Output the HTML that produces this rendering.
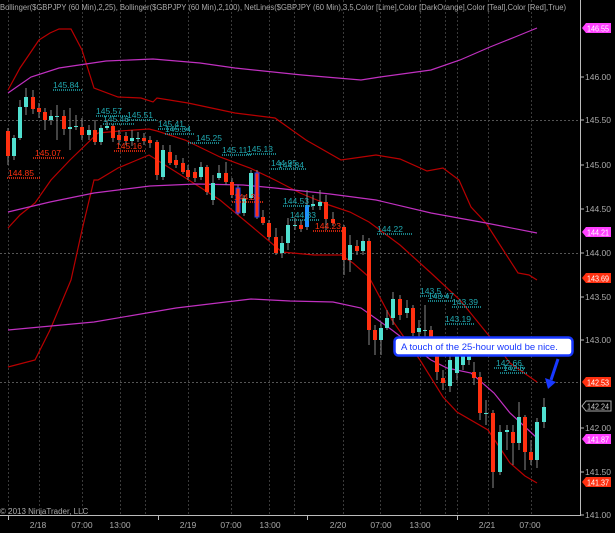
<!DOCTYPE html>
<html><head><meta charset="utf-8"><style>
html,body{margin:0;padding:0;background:#000;}
svg{display:block;font-family:"Liberation Sans",sans-serif;}
</style></head><body>
<svg width="615" height="533" viewBox="0 0 615 533" xmlns="http://www.w3.org/2000/svg">
<rect width="615" height="533" fill="#000"/>
<g stroke="#3a3a3a" stroke-width="1" stroke-dasharray="2,2">
<line x1="8.5" y1="0" x2="8.5" y2="515"/><line x1="39.5" y1="0" x2="39.5" y2="515"/><line x1="82.5" y1="0" x2="82.5" y2="515"/><line x1="120.5" y1="0" x2="120.5" y2="515"/><line x1="145.5" y1="0" x2="145.5" y2="515"/><line x1="188.5" y1="0" x2="188.5" y2="515"/><line x1="231.5" y1="0" x2="231.5" y2="515"/><line x1="269.5" y1="0" x2="269.5" y2="515"/><line x1="294.5" y1="0" x2="294.5" y2="515"/><line x1="343.5" y1="0" x2="343.5" y2="515"/><line x1="380.5" y1="0" x2="380.5" y2="515"/><line x1="420.5" y1="0" x2="420.5" y2="515"/><line x1="445.5" y1="0" x2="445.5" y2="515"/><line x1="457.5" y1="0" x2="457.5" y2="515"/><line x1="488.5" y1="0" x2="488.5" y2="515"/><line x1="531.5" y1="0" x2="531.5" y2="515"/>
</g>
<g stroke="#555" stroke-width="1" stroke-dasharray="2,2">
<line x1="0" y1="120.5" x2="580" y2="120.5"/><line x1="0" y1="253.5" x2="580" y2="253.5"/><line x1="0" y1="382.5" x2="580" y2="382.5"/>
</g>
<g fill="none" stroke-width="1.2">
<polyline stroke="#b80000" points="8,90 20,68 39,40 50,33 59,29 71,29 82,50 94,88 118,97 141,98 153,102 157,98 188,103 235,113 275,118 306,140 341,160 376,155 400,159 427,171 443,168 459,180 471,207 486,223 500,245 518,273 529,275 537,280"/>
<polyline stroke="#b80000" points="8,228 20,215 35,203 51,180 70,160 98,133 120,131 149,129 157,131 185,140 220,157 250,168 275,180 300,193 329,205 350,212 369,222 400,245 431,273 460,300 490,337 510,363 537,382"/>
<polyline stroke="#b80000" points="8,367 35,360 50,330 71,280 82,230 94,180 98,180 118,168 149,155 157,160 184,177 220,200 250,225 282,252 314,255 341,255 353,263 369,277 392,320 420,360 443,397 457,412 488,430 510,463 525,476 537,483"/>
<polyline stroke="#c030c0" points="8,93 31,77 59,68 106,61 153,59 200,63 235,68 302,75 361,80 380,77 431,70 460,60 490,47 515,37 537,28"/>
<polyline stroke="#c030c0" points="8,212 50,202 94,193 150,186 196,184 243,185 275,188 330,194 376,200 431,213 486,223 537,233"/>
<polyline stroke="#c030c0" points="8,330 94,322 176,308 251,299 290,301 333,302 361,308 392,330 431,360 447,368 471,373 494,393 510,413 537,438"/>
</g>
<g stroke="#888" stroke-width="1">
<line x1="8" y1="128" x2="8" y2="165"/><line x1="14" y1="135" x2="14" y2="160"/><line x1="20" y1="100" x2="20" y2="140"/><line x1="26" y1="88" x2="26" y2="115"/><line x1="33" y1="90" x2="33" y2="114"/><line x1="39" y1="103" x2="39" y2="118"/><line x1="45" y1="108" x2="45" y2="130"/><line x1="51" y1="110" x2="51" y2="125"/><line x1="57" y1="105" x2="57" y2="140"/><line x1="64" y1="110" x2="64" y2="135"/><line x1="70" y1="108" x2="70" y2="150"/><line x1="76" y1="115" x2="76" y2="130"/><line x1="82" y1="118" x2="82" y2="140"/><line x1="89" y1="125" x2="89" y2="140"/><line x1="95" y1="120" x2="95" y2="145"/><line x1="101" y1="125" x2="101" y2="145"/><line x1="107" y1="120" x2="107" y2="130"/><line x1="113" y1="124" x2="113" y2="142"/><line x1="119" y1="130" x2="119" y2="145"/><line x1="126" y1="132" x2="126" y2="145"/><line x1="132" y1="130" x2="132" y2="146"/><line x1="138" y1="132" x2="138" y2="142"/><line x1="144" y1="133" x2="144" y2="145"/><line x1="150" y1="136" x2="150" y2="148"/><line x1="157" y1="140" x2="157" y2="180"/><line x1="163" y1="145" x2="163" y2="180"/><line x1="170" y1="145" x2="170" y2="165"/><line x1="176" y1="155" x2="176" y2="168"/><line x1="183" y1="158" x2="183" y2="174"/><line x1="188" y1="165" x2="188" y2="180"/><line x1="195" y1="168" x2="195" y2="182"/><line x1="201" y1="162" x2="201" y2="180"/><line x1="207" y1="165" x2="207" y2="195"/><line x1="213" y1="175" x2="213" y2="205"/><line x1="219" y1="165" x2="219" y2="180"/><line x1="226" y1="162" x2="226" y2="185"/><line x1="232" y1="178" x2="232" y2="198"/><line x1="238" y1="185" x2="238" y2="215"/><line x1="244" y1="195" x2="244" y2="216"/><line x1="251" y1="170" x2="251" y2="200"/><line x1="257" y1="170" x2="257" y2="219"/><line x1="263" y1="210" x2="263" y2="225"/><line x1="269" y1="220" x2="269" y2="240"/><line x1="276" y1="228" x2="276" y2="255"/><line x1="282" y1="236" x2="282" y2="258"/><line x1="288" y1="218" x2="288" y2="250"/><line x1="295" y1="218" x2="295" y2="230"/><line x1="301" y1="220" x2="301" y2="232"/><line x1="307" y1="190" x2="307" y2="230"/><line x1="313" y1="195" x2="313" y2="210"/><line x1="320" y1="190" x2="320" y2="210"/><line x1="326" y1="195" x2="326" y2="230"/><line x1="333" y1="212" x2="333" y2="226"/><line x1="344" y1="225" x2="344" y2="275"/><line x1="350" y1="235" x2="350" y2="272"/><line x1="357" y1="240" x2="357" y2="255"/><line x1="363" y1="235" x2="363" y2="255"/><line x1="369" y1="238" x2="369" y2="345"/><line x1="375" y1="325" x2="375" y2="355"/><line x1="381" y1="322" x2="381" y2="355"/><line x1="387" y1="310" x2="387" y2="330"/><line x1="393" y1="292" x2="393" y2="325"/><line x1="400" y1="295" x2="400" y2="320"/><line x1="407" y1="300" x2="407" y2="318"/><line x1="413" y1="305" x2="413" y2="336"/><line x1="419" y1="320" x2="419" y2="340"/><line x1="425" y1="305" x2="425" y2="340"/><line x1="431" y1="326" x2="431" y2="355"/><line x1="437" y1="340" x2="437" y2="380"/><line x1="443" y1="370" x2="443" y2="390"/><line x1="450" y1="355" x2="450" y2="392"/><line x1="457" y1="345" x2="457" y2="380"/><line x1="463" y1="345" x2="463" y2="370"/><line x1="469" y1="350" x2="469" y2="365"/><line x1="474" y1="362" x2="474" y2="385"/><line x1="480" y1="372" x2="480" y2="420"/><line x1="486" y1="400" x2="486" y2="425"/><line x1="493" y1="410" x2="493" y2="488"/><line x1="500" y1="425" x2="500" y2="475"/><line x1="507" y1="425" x2="507" y2="450"/><line x1="513" y1="425" x2="513" y2="465"/><line x1="519" y1="402" x2="519" y2="450"/><line x1="525" y1="415" x2="525" y2="470"/><line x1="531" y1="440" x2="531" y2="465"/><line x1="537" y1="418" x2="537" y2="468"/><line x1="544" y1="398" x2="544" y2="428"/>
</g>
<g>
<g fill="#ff3010">
<rect x="6" y="131" width="4" height="25"/><rect x="31" y="97" width="4" height="12"/><rect x="37" y="108" width="4" height="4"/><rect x="43" y="112" width="4" height="8"/><rect x="62" y="116" width="4" height="13"/><rect x="80" y="127" width="4" height="8"/><rect x="93" y="130" width="4" height="12"/><rect x="111" y="126" width="4" height="12"/><rect x="117" y="135" width="4" height="5"/><rect x="124" y="136" width="4" height="5"/><rect x="142" y="138" width="4" height="3"/><rect x="148" y="140" width="4" height="3"/><rect x="155" y="142" width="4" height="33"/><rect x="168" y="152" width="4" height="11"/><rect x="174" y="160" width="4" height="5"/><rect x="181" y="163" width="4" height="9"/><rect x="186" y="170" width="4" height="7"/><rect x="193" y="172" width="4" height="6"/><rect x="205" y="167" width="4" height="25"/><rect x="224" y="173" width="4" height="9"/><rect x="230" y="182" width="4" height="13"/><rect x="236" y="188" width="4" height="25" stroke="#2040ff" stroke-width="1"/><rect x="255" y="173" width="4" height="44" stroke="#2040ff" stroke-width="1"/><rect x="261" y="217" width="4" height="6"/><rect x="267" y="223" width="4" height="14"/><rect x="274" y="237" width="4" height="16"/><rect x="299" y="225" width="4" height="4"/><rect x="324" y="202" width="4" height="17"/><rect x="331" y="219" width="4" height="4"/><rect x="342" y="227" width="4" height="33"/><rect x="355" y="246" width="4" height="5"/><rect x="367" y="241" width="4" height="89"/><rect x="373" y="330" width="4" height="10"/><rect x="398" y="299" width="4" height="16"/><rect x="411" y="308" width="4" height="25"/><rect x="429" y="330" width="4" height="17"/><rect x="435" y="345" width="4" height="27"/><rect x="441" y="378" width="4" height="5"/><rect x="472" y="372" width="4" height="6"/><rect x="478" y="377" width="4" height="36"/><rect x="491" y="413" width="4" height="59"/><rect x="511" y="432" width="4" height="11"/><rect x="523" y="417" width="4" height="35"/><rect x="529" y="452" width="4" height="8"/>
</g>
<g fill="#50e0d0">
<rect x="12" y="138" width="4" height="18"/><rect x="18" y="107" width="4" height="31"/><rect x="24" y="97" width="4" height="10"/><rect x="49" y="116" width="4" height="4"/><rect x="55" y="116" width="4" height="1"/><rect x="68" y="127" width="4" height="2"/><rect x="74" y="126" width="4" height="1"/><rect x="87" y="130" width="4" height="5"/><rect x="99" y="128" width="4" height="14"/><rect x="105" y="126" width="4" height="2"/><rect x="130" y="138" width="4" height="3"/><rect x="136" y="138" width="4" height="1"/><rect x="161" y="150" width="4" height="27"/><rect x="199" y="167" width="4" height="10"/><rect x="211" y="183" width="4" height="17"/><rect x="217" y="173" width="4" height="5"/><rect x="242" y="198" width="4" height="15"/><rect x="249" y="173" width="4" height="25"/><rect x="280" y="243" width="4" height="10"/><rect x="286" y="225" width="4" height="18"/><rect x="293" y="225" width="4" height="1"/><rect x="305" y="205" width="4" height="22" fill="#2090ff"/><rect x="311" y="204" width="4" height="2"/><rect x="318" y="202" width="4" height="4"/><rect x="348" y="245" width="4" height="15"/><rect x="361" y="241" width="4" height="10"/><rect x="379" y="328" width="4" height="12"/><rect x="385" y="318" width="4" height="10"/><rect x="391" y="299" width="4" height="19"/><rect x="405" y="308" width="4" height="5"/><rect x="417" y="328" width="4" height="4"/><rect x="423" y="330" width="4" height="1"/><rect x="448" y="360" width="4" height="26"/><rect x="455" y="355" width="4" height="18"/><rect x="461" y="350" width="4" height="15"/><rect x="467" y="355" width="4" height="5"/><rect x="484" y="413" width="4" height="1"/><rect x="498" y="432" width="4" height="40"/><rect x="505" y="430" width="4" height="2"/><rect x="517" y="417" width="4" height="26"/><rect x="535" y="422" width="4" height="38"/><rect x="542" y="407" width="4" height="15"/>
</g>
</g>
<g font-size="8.5" fill="#20a8b0">
<text x="53" y="88">145.84</text><text x="96" y="114">145.57</text><text x="127" y="118">145.51</text><text x="103" y="122">145.46</text><text x="158" y="127">145.41</text><text x="165" y="132">145.34</text><text x="196" y="141">145.25</text><text x="222" y="153">145.11</text><text x="247" y="152">145.13</text><text x="271" y="166">144.95</text><text x="278" y="168">144.84</text><text x="283" y="204">144.53</text><text x="290" y="218">144.33</text><text x="377" y="232">144.22</text><text x="420" y="294">143.5</text><text x="428" y="299">143.47</text><text x="452" y="305">143.39</text><text x="445" y="322">143.19</text><text x="496" y="366">142.66</text><text x="503" y="371">142.6</text>
</g>
<g stroke="#20a8b0" stroke-width="1.5" stroke-dasharray="1,1">
<line x1="53" y1="90" x2="82" y2="90"/><line x1="96" y1="116" x2="127" y2="116"/><line x1="127" y1="120" x2="157" y2="120"/><line x1="103" y1="124" x2="135" y2="124"/><line x1="158" y1="129" x2="190" y2="129"/><line x1="165" y1="134" x2="195" y2="134"/><line x1="188" y1="143" x2="220" y2="143"/><line x1="222" y1="155" x2="252" y2="155"/><line x1="247" y1="154" x2="276" y2="154"/><line x1="271" y1="169" x2="307" y2="169"/><line x1="283" y1="206" x2="313" y2="206"/><line x1="290" y1="220" x2="320" y2="220"/><line x1="377" y1="234" x2="413" y2="234"/><line x1="420" y1="296" x2="449" y2="296"/><line x1="428" y1="301" x2="457" y2="301"/><line x1="452" y1="307" x2="482" y2="307"/><line x1="445" y1="324" x2="475" y2="324"/><line x1="494" y1="368" x2="525" y2="368"/><line x1="500" y1="373" x2="528" y2="373"/>
</g>
<g font-size="8.5" fill="#ff3010">
<text x="35" y="156">145.07</text><text x="116" y="149">145.16</text><text x="8" y="176">144.85</text><text x="234" y="200">144.35</text><text x="315" y="229">144.23</text>
</g>
<g stroke="#ff3010" stroke-width="1.5" stroke-dasharray="1,1">
<line x1="33" y1="158" x2="64" y2="158"/><line x1="114" y1="151" x2="146" y2="151"/><line x1="7" y1="178" x2="40" y2="178"/><line x1="232" y1="202" x2="264" y2="202"/><line x1="313" y1="231" x2="345" y2="231"/>
</g>
<line x1="580.5" y1="0" x2="580.5" y2="516" stroke="#bbb" stroke-width="1"/>
<line x1="0" y1="515.5" x2="581" y2="515.5" stroke="#bbb" stroke-width="1"/>
<g stroke="#bbb"><line x1="8.5" y1="516" x2="8.5" y2="520"/><line x1="158.5" y1="516" x2="158.5" y2="520"/><line x1="307.5" y1="516" x2="307.5" y2="520"/><line x1="457.5" y1="516" x2="457.5" y2="520"/></g>
<g font-size="8.5" fill="#aaa">
<g stroke="#bbb"><line x1="580" y1="77" x2="584" y2="77"/><line x1="580" y1="120" x2="584" y2="120"/><line x1="580" y1="165" x2="584" y2="165"/><line x1="580" y1="209" x2="584" y2="209"/><line x1="580" y1="253" x2="584" y2="253"/><line x1="580" y1="297" x2="584" y2="297"/><line x1="580" y1="340" x2="584" y2="340"/><line x1="580" y1="428" x2="584" y2="428"/><line x1="580" y1="472" x2="584" y2="472"/><line x1="580" y1="515" x2="584" y2="515"/></g>
<text x="585" y="80">146.00</text><text x="585" y="123">145.50</text><text x="585" y="168">145.00</text><text x="585" y="212">144.50</text><text x="585" y="256">144.00</text><text x="585" y="300">143.50</text><text x="585" y="343">143.00</text><text x="585" y="431">142.00</text><text x="585" y="475">141.50</text><text x="585" y="518">141.00</text>
<text text-anchor="middle" x="38" y="528">2/18</text><text text-anchor="middle" x="82" y="528">07:00</text><text text-anchor="middle" x="120" y="528">13:00</text><text text-anchor="middle" x="188" y="528">2/19</text><text text-anchor="middle" x="231" y="528">07:00</text><text text-anchor="middle" x="270" y="528">13:00</text><text text-anchor="middle" x="338" y="528">2/20</text><text text-anchor="middle" x="381" y="528">07:00</text><text text-anchor="middle" x="420" y="528">13:00</text><text text-anchor="middle" x="487" y="528">2/21</text><text text-anchor="middle" x="530" y="528">07:00</text>
<text x="0" y="514" font-size="8">© 2013 NinjaTrader, LLC</text>
<text x="0" y="10" font-size="8" textLength="566" lengthAdjust="spacingAndGlyphs">Bollinger($GBPJPY (60 Min),2,25), Bollinger($GBPJPY (60 Min),2,100), NetLines($GBPJPY (60 Min),3,5,Color [Lime],Color [DarkOrange],Color [Teal],Color [Red],True)</text>
</g>
<g font-size="8">
<path d="M582,28 L586,23 L611,23 L611,33 L586,33 Z" fill="#ff40ff"/><text x="587" y="31.5" fill="#fff" textLength="22" lengthAdjust="spacingAndGlyphs">146.55</text>
<path d="M582,232 L586,227 L611,227 L611,237 L586,237 Z" fill="#ff40ff"/><text x="587" y="235.5" fill="#fff" textLength="22" lengthAdjust="spacingAndGlyphs">144.21</text>
<path d="M582,278 L586,273 L611,273 L611,283 L586,283 Z" fill="#ff3010"/><text x="587" y="281.5" fill="#fff" textLength="22" lengthAdjust="spacingAndGlyphs">143.69</text>
<path d="M582,382 L586,377 L611,377 L611,387 L586,387 Z" fill="#ff3010"/><text x="587" y="385.5" fill="#fff" textLength="22" lengthAdjust="spacingAndGlyphs">142.53</text>
<path d="M582,406 L586,401 L611,401 L611,411 L586,411 Z" fill="#000" stroke="#aaa"/><text x="587" y="409.5" fill="#ccc" textLength="22" lengthAdjust="spacingAndGlyphs">142.24</text>
<path d="M582,439 L586,434 L611,434 L611,444 L586,444 Z" fill="#ff40ff"/><text x="587" y="442.5" fill="#fff" textLength="22" lengthAdjust="spacingAndGlyphs">141.87</text>
<path d="M582,482 L586,477 L611,477 L611,487 L586,487 Z" fill="#ff3010"/><text x="587" y="485.5" fill="#fff" textLength="22" lengthAdjust="spacingAndGlyphs">141.37</text>
</g>
<rect x="394.5" y="337.5" width="178" height="18" rx="4" fill="#fff" stroke="#1838ff" stroke-width="2.5"/>
<text x="401" y="350" font-size="9.5" fill="#1838ff">A touch of the 25-hour would be nice.</text>
<path d="M558,359 L551,380" stroke="#1838ff" stroke-width="3" fill="none"/>
<path d="M545,378 L548,389 L556,382 Z" fill="#1838ff"/>
</svg>
</body></html>
